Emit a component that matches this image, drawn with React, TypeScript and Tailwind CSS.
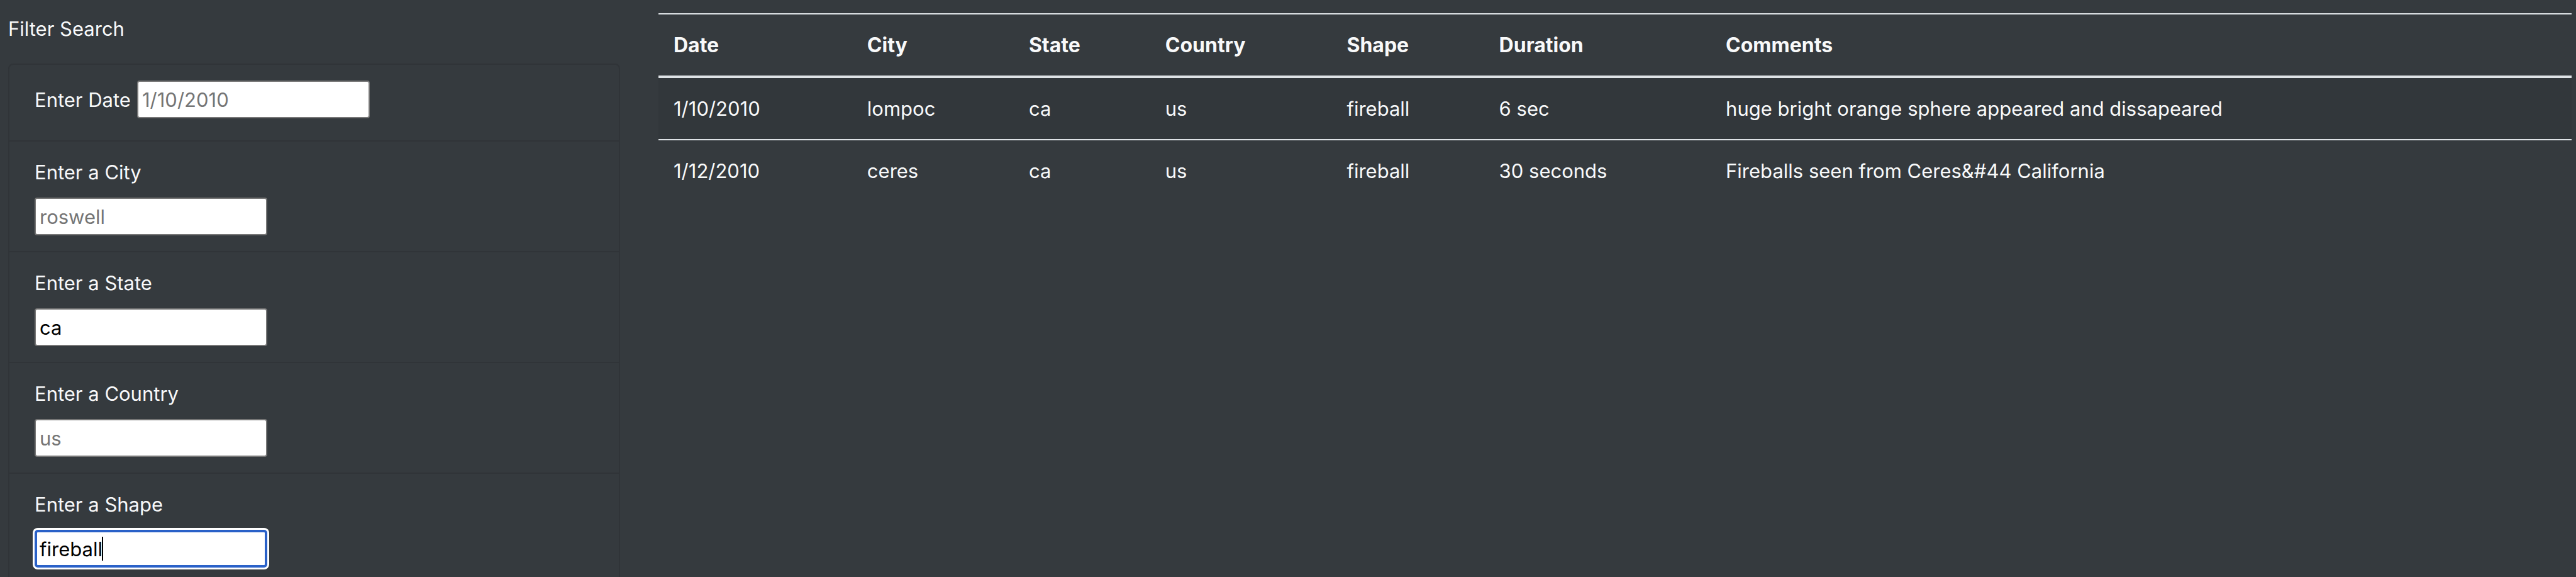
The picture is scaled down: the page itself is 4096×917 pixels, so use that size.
import { useState } from "react";

const columns = [
  { name: "Date", width: "w-[10.12%]" },
  { name: "City", width: "w-[8.45%]" },
  { name: "State", width: "w-[7.13%]" },
  { name: "Country", width: "w-[9.49%]" },
  { name: "Shape", width: "w-[7.96%]" },
  { name: "Duration", width: "w-[11.85%]" },
  { name: "Comments", width: "" },
];

const sightings = [
  ["1/10/2010", "lompoc", "ca", "us", "fireball", "6 sec", "huge bright orange sphere appeared and dissapeared"],
  ["1/12/2010", "ceres", "ca", "us", "fireball", "30 seconds", "Fireballs seen from Ceres&#44 California"],
];

const filters = [
  { id: "city", label: "Enter a City", placeholder: "roswell", value: "" },
  { id: "state", label: "Enter a State", placeholder: "ca", value: "ca" },
  { id: "country", label: "Enter a Country", placeholder: "us", value: "" },
  { id: "shape", label: "Enter a Shape", placeholder: "circle", value: "fireball", active: true },
];

const inputBase =
  "block h-[60px] w-[370px] bg-white text-[31px] text-black outline-none placeholder:text-[#757575] placeholder:opacity-100";
const inputIdle = "rounded-[4px] border-2 border-[#767676] px-[6px]";
const inputActive = "rounded-[5px] border-4 border-[#2a61c8] px-1 ring-[3px] ring-white";

type FieldProps = { id: string; placeholder: string; initial: string; active?: boolean };

function Field({ id, placeholder, initial, active }: FieldProps) {
  const [value, setValue] = useState(initial);
  return (
    <div className="relative w-fit">
      <input
        id={id}
        type="text"
        placeholder={placeholder}
        value={value}
        onChange={(e) => setValue(e.target.value)}
        className={`${inputBase} ${active ? inputActive : inputIdle}`}
      />
      {active && <span aria-hidden="true" className="absolute top-[11px] left-[107px] h-[38px] w-[2px] bg-black" />}
    </div>
  );
}

export default function App() {
  return (
    <div className="flex h-screen items-start overflow-hidden bg-[#353a3e] font-['Inter',sans-serif] text-[31px] leading-[49px] text-[#f8f9fa]">
      <aside className="w-1/4 shrink-0 pt-[21px] pr-[38px] pl-[13px]">
        <form>
          <p className="mb-[31px]">Filter Search</p>
          <ul className="rounded-lg border-2 border-[#303438]">
            <li className="flex items-center gap-[10px] border-b-2 border-[#303438] px-10 pt-[25px] pb-[35px]">
              <label htmlFor="date">Enter Date</label>
              <Field id="date" placeholder="1/10/2010" initial="" />
            </li>
            {filters.map((f) => (
              <li key={f.id} className="border-b-2 border-[#303438] px-10 pt-6 pb-[25px] last:border-b-0">
                <label htmlFor={f.id} className="mb-4 block w-fit">
                  {f.label}
                </label>
                <Field id={f.id} placeholder={f.placeholder} initial={f.value} active={f.active} />
              </li>
            ))}
          </ul>
        </form>
      </aside>
      <main className="min-w-0 flex-1 pt-[21px] pr-[7px] pl-[23px]">
        <table className="w-full table-fixed border-separate border-spacing-0 text-left">
          <thead>
            <tr>
              {columns.map((c) => (
                <th
                  key={c.name}
                  scope="col"
                  className={`border-t-2 border-b-4 border-[#dee2e6] px-6 py-6 text-[32px] font-bold ${c.width}`}
                >
                  {c.name}
                </th>
              ))}
            </tr>
          </thead>
          <tbody>
            {sightings.map((row) => (
              <tr key={row[0]} className="group odd:bg-[#32373b]">
                {row.map((cell, i) => (
                  <td key={i} className="border-t-2 border-[#dee2e6] px-6 py-6 group-first:border-t-0">
                    {cell}
                  </td>
                ))}
              </tr>
            ))}
          </tbody>
        </table>
      </main>
    </div>
  );
}
